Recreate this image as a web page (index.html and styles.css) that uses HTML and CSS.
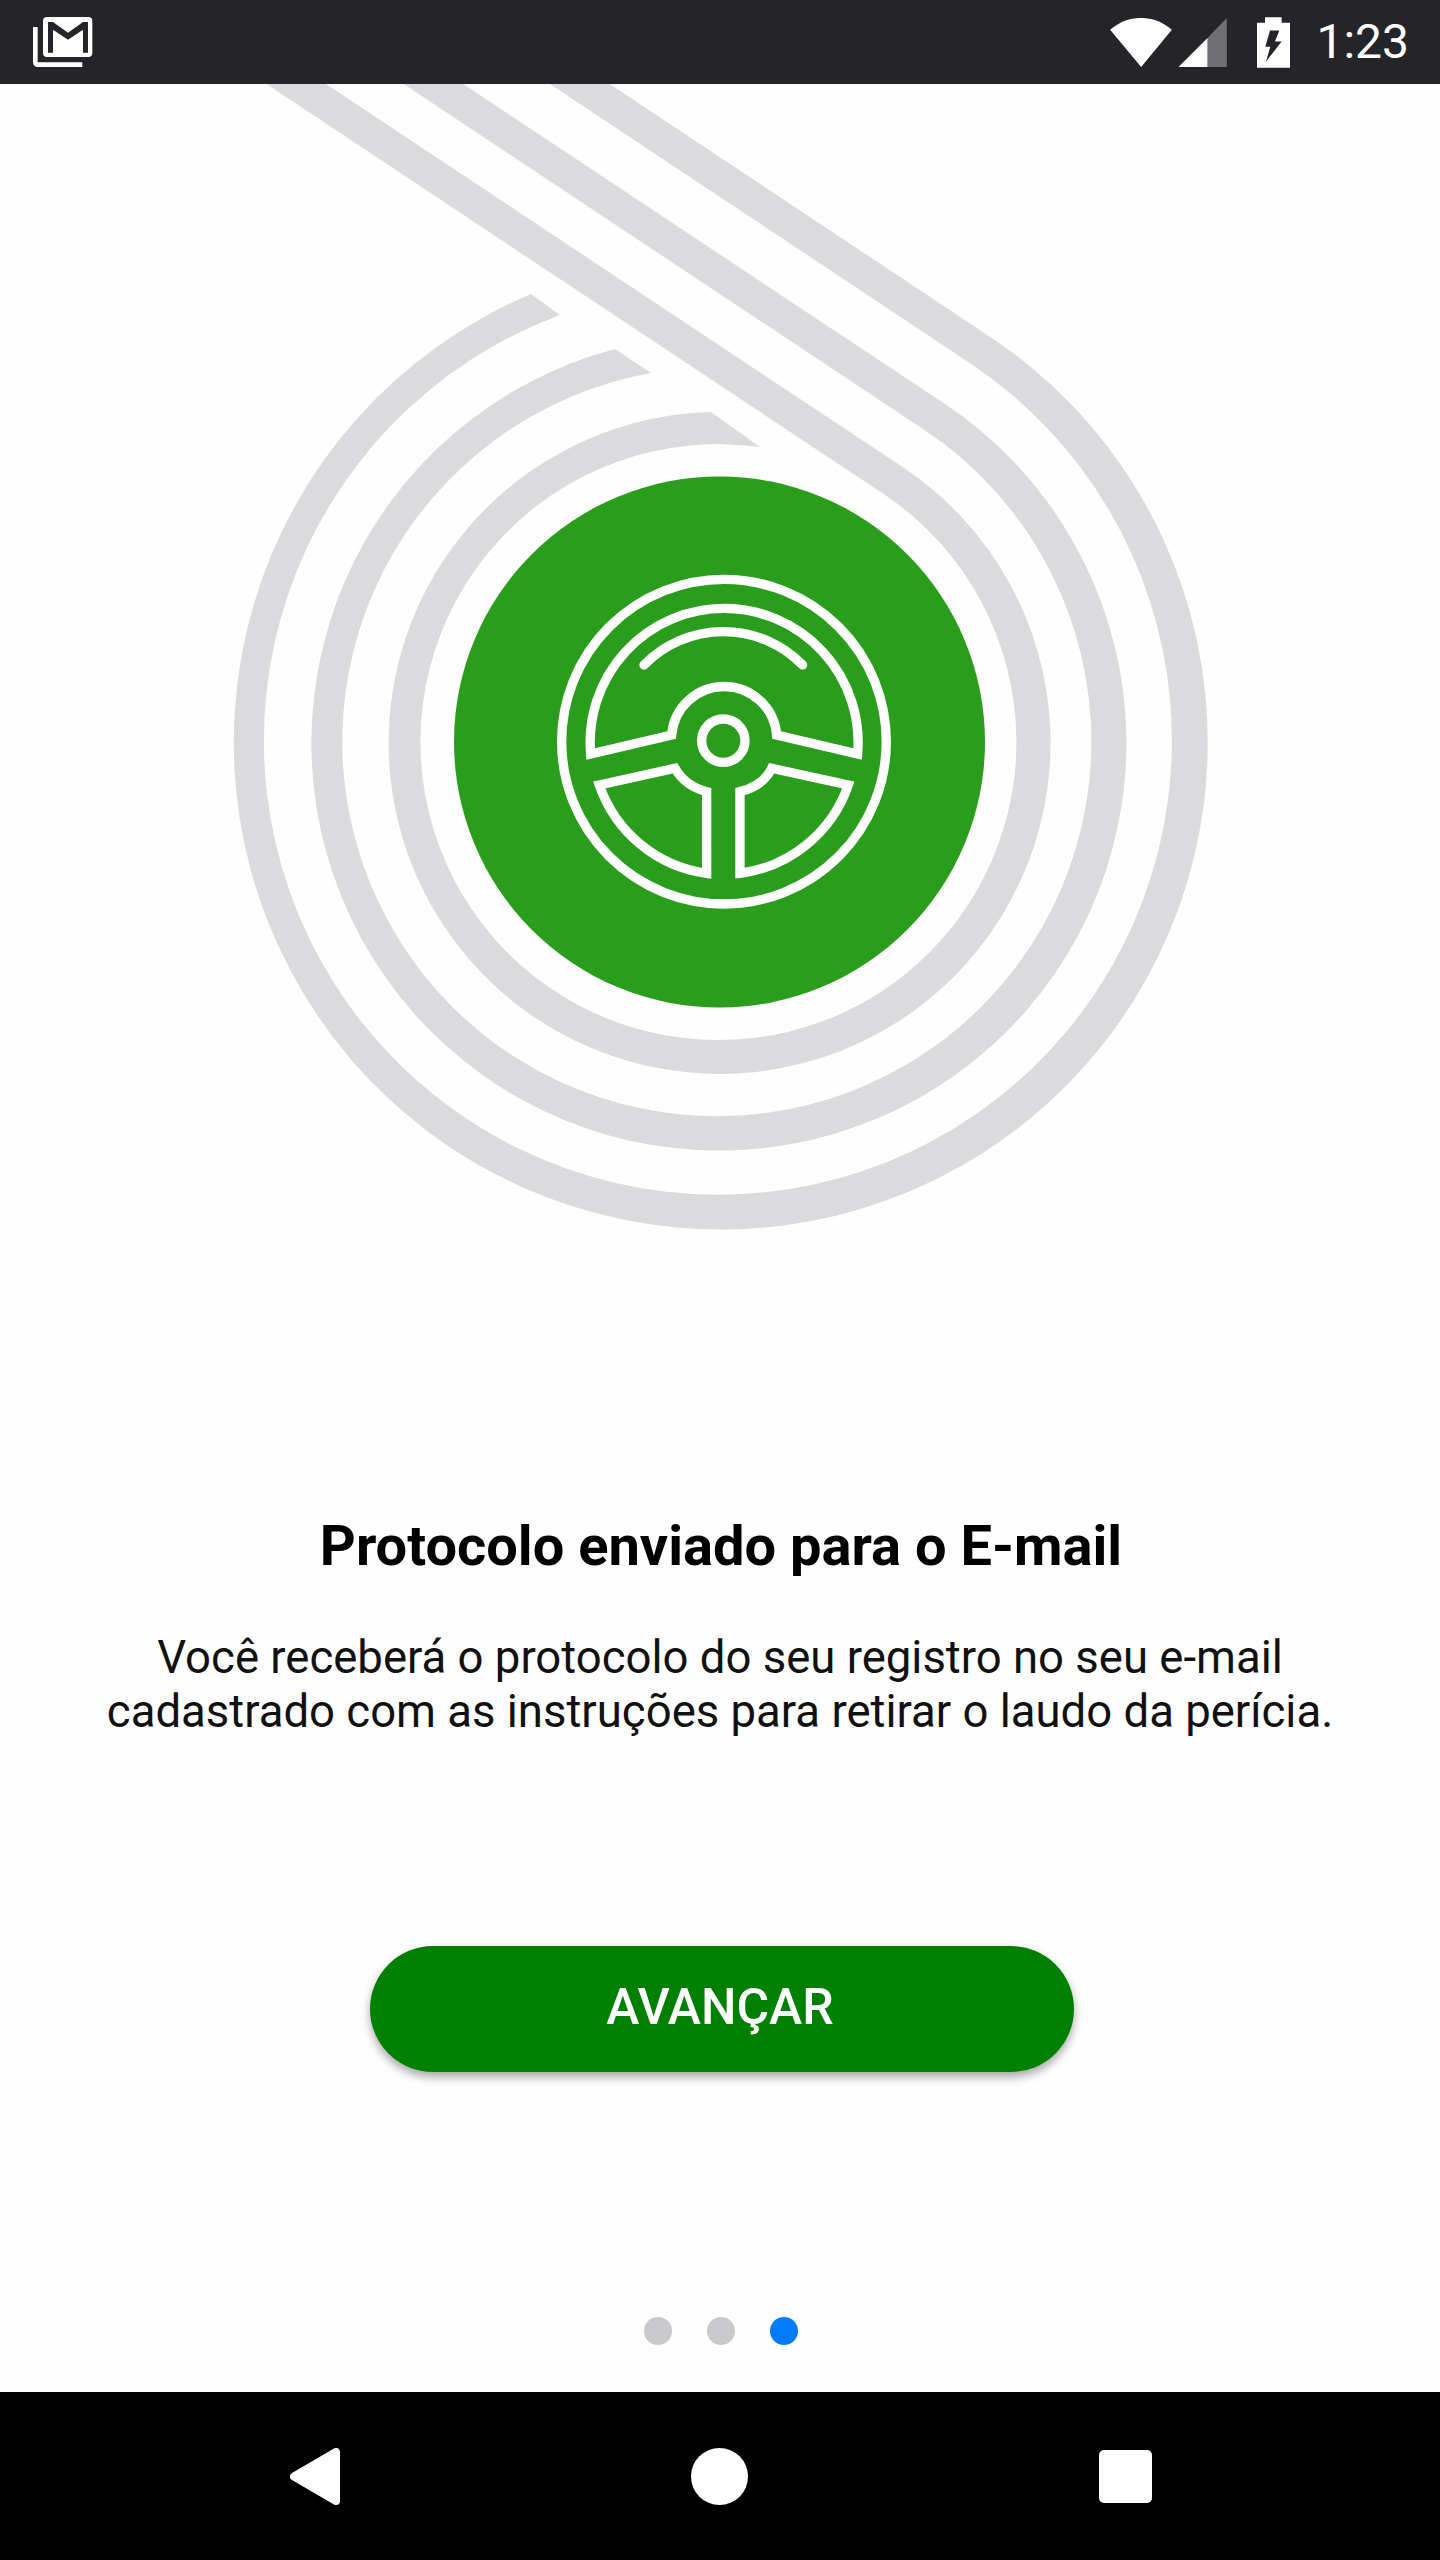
FILE: index.html
```html
<!DOCTYPE html>
<html lang="pt-BR">
<head>
<meta charset="utf-8">
<title>Protocolo enviado para o E-mail</title>
<link rel="stylesheet" href="styles.css">
</head>
<body>
<div class="screen">
  <header class="status-bar">
    <svg class="gmail-icon" viewBox="100 50 180 152">
      <path class="gmail-back" d="M107 80V186a7 7 0 0 0 7 7H248"/>
      <path class="gmail-front" fill-rule="evenodd" d="M142 50H266a12 12 0 0 1 12 12V158a12 12 0 0 1-12 12H142a12 12 0 0 1-12-12V62a12 12 0 0 1 12-12ZM145 65V157H160V88L205 118L250 88V157H265V65H250L205 97L160 65Z"/>
    </svg>
    <div class="status-right">
      <svg class="signal-icons" viewBox="90 50 350 147">
        <path class="glyph" d="M90 85C145 38 220 38 275 85L183 197Z"/>
        <path class="glyph-dim" d="M382 110L440 50V197H382Z"/>
        <path class="glyph" d="M295 197L382 110V197Z"/>
      </svg>
      <svg class="battery-icon" viewBox="531 48 99 152">
        <path class="glyph" fill-rule="evenodd" d="M555 48H605V65H630V200H531V65H555ZM570 88L556 137H571L558 181L605 121H585L598 88Z"/>
      </svg>
      <span class="clock">1:23</span>
    </div>
  </header>

  <main class="content">
    <svg class="hero" viewBox="200 84 1040 1160">
      <g class="tracks">
        <path d="M531 294A487 487 0 1 0 989.5 336.4L573.5 60L513.8 60L971.2 363.9A454 454 0 1 1 560 315Z"/>
        <path d="M615 349A407.5 407.5 0 1 0 944.7 403.8L427.2 60L367.5 60L926.4 431.3A374.5 374.5 0 1 1 651 373Z"/>
        <path d="M711 412A331 331 0 1 0 902.6 467.1L289.9 60L230.3 60L884.4 494.6A298 298 0 1 1 760 447Z"/>
      </g>
      <circle class="disc" cx="719.5" cy="742" r="265.5"/>
      <g class="wheel" transform="translate(500 530) scale(0.3333)">
        <circle cx="672" cy="635" r="487"/>
        <path d="M272 672A402 402 0 1 1 1073 672L830 615A158 158 0 0 0 515 615Z"/>
        <path d="M432 405A333 333 0 0 1 908 405"/>
        <circle cx="670" cy="632" r="65"/>
        <path d="M298 765L525 715Q555 768 620 785V1030A398 398 0 0 1 298 765Z"/>
        <path d="M1045 765L815 715Q790 768 720 785V1030A398 398 0 0 0 1045 765Z"/>
      </g>
    </svg>

    <h1 class="title">Protocolo enviado para o E-mail</h1>
    <p class="description">Você receberá o protocolo do seu registro no seu e-mail<br>cadastrado com as instruções para retirar o laudo da perícia.</p>
    <button class="next-button" type="button">AVANÇAR</button>
    <div class="pager">
      <span class="dot"></span>
      <span class="dot"></span>
      <span class="dot dot-active"></span>
    </div>
  </main>

  <nav class="nav-bar">
    <svg class="nav-back" viewBox="0 0 50 57"><polygon points="46,4 46,53 4,28.5"/></svg>
    <span class="nav-home"></span>
    <span class="nav-recents"></span>
  </nav>
</div>
</body>
</html>
```

FILE: styles.css
```css
* {
  box-sizing: border-box;
}

html,
body {
  margin: 0;
  padding: 0;
}

body {
  font-family: Roboto, "Liberation Sans", sans-serif;
  background: #fefefe;
}

.screen {
  width: 1440px;
  height: 2560px;
  display: flex;
  flex-direction: column;
  overflow: hidden;
}

/* Status bar */
.status-bar {
  flex: none;
  height: 84px;
  background: #252428;
  display: flex;
  align-items: center;
  justify-content: space-between;
  padding: 0 31px 0 33px;
}

.gmail-icon {
  width: 60px;
  height: 50.7px;
  display: block;
}

.gmail-back {
  fill: none;
  stroke: #fff;
  stroke-width: 14;
}

.gmail-front,
.glyph {
  fill: #fff;
}

.glyph-dim {
  fill: #6f6e71;
}

.status-right {
  display: flex;
  align-items: center;
}

.signal-icons {
  width: 117px;
  height: 49px;
  display: block;
}

.battery-icon {
  width: 33px;
  height: 51px;
  margin-left: 30px;
  display: block;
}

.clock {
  margin-left: 26px;
  font-size: 48px;
  line-height: 56px;
  color: #fff;
}

/* Main content */
.content {
  flex: 1;
  display: flex;
  flex-direction: column;
  align-items: center;
}

.hero {
  width: 1040px;
  height: 1160px;
  flex: none;
  display: block;
}

.tracks path {
  fill: #dbdadd;
}

.disc {
  fill: #2a9e1c;
}

.wheel circle,
.wheel path {
  fill: none;
  stroke: #fff;
  stroke-width: 28;
  stroke-linecap: round;
}

.title {
  margin: 272px 0 0;
  padding-left: 2px;
  font-size: 56px;
  line-height: 60px;
  font-weight: 700;
  color: #000;
  text-align: center;
}

.description {
  margin: 55px 0 0;
  font-size: 45.5px;
  line-height: 54px;
  font-weight: 400;
  color: #111;
  text-align: center;
}

.next-button {
  margin: 207px 0 0 4px;
  width: 704px;
  height: 126px;
  padding: 0 4px 5px 0;
  border: 0;
  border-radius: 63px;
  background: #008000;
  color: #fff;
  font-family: inherit;
  font-size: 50px;
  font-weight: 500;
  box-shadow: 0 5px 10px rgba(0, 0, 0, 0.35);
}

.pager {
  margin-top: 245px;
  display: flex;
  gap: 35px;
  padding-left: 2px;
}

.dot {
  width: 28px;
  height: 28px;
  border-radius: 50%;
  background: #c9c9cb;
}

.dot-active {
  background: #007bff;
}

/* Navigation bar */
.nav-bar {
  flex: none;
  height: 168px;
  background: #000;
  display: flex;
  align-items: center;
  justify-content: space-between;
  padding: 0 288px 0 290px;
}

.nav-back {
  width: 50px;
  height: 57px;
  display: block;
}

.nav-back polygon {
  fill: #fff;
  stroke: #fff;
  stroke-width: 8;
  stroke-linejoin: round;
}

.nav-home {
  width: 57px;
  height: 57px;
  border-radius: 50%;
  background: #fff;
}

.nav-recents {
  width: 53px;
  height: 53px;
  border-radius: 5px;
  background: #fff;
}
```
